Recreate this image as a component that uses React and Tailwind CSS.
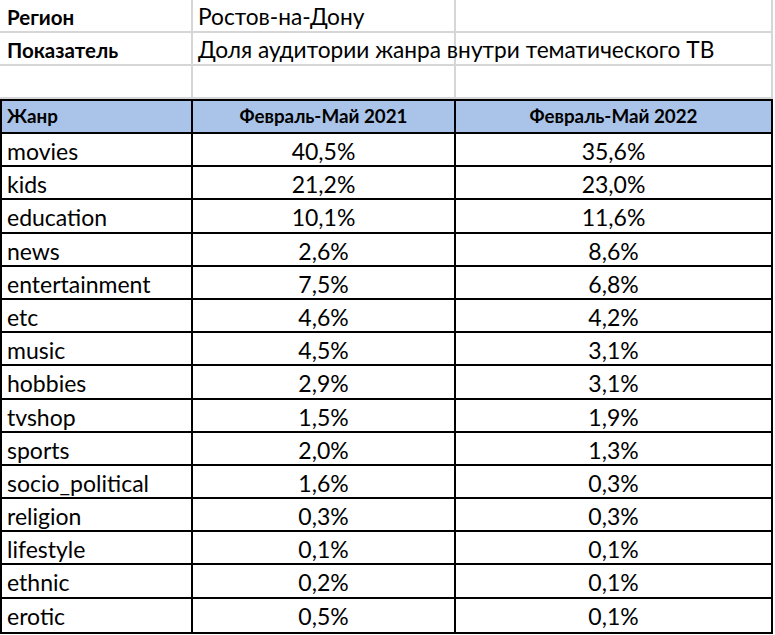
const info = [
  { label: 'Регион', value: 'Ростов-на-Дону' },
  { label: 'Показатель', value: 'Доля аудитории жанра внутри тематического ТВ' },
  { label: '', value: '' },
];

const rows = [
  ['movies', '40,5%', '35,6%'],
  ['kids', '21,2%', '23,0%'],
  ['education', '10,1%', '11,6%'],
  ['news', '2,6%', '8,6%'],
  ['entertainment', '7,5%', '6,8%'],
  ['etc', '4,6%', '4,2%'],
  ['music', '4,5%', '3,1%'],
  ['hobbies', '2,9%', '3,1%'],
  ['tvshop', '1,5%', '1,9%'],
  ['sports', '2,0%', '1,3%'],
  ['socio_political', '1,6%', '0,3%'],
  ['religion', '0,3%', '0,3%'],
  ['lifestyle', '0,1%', '0,1%'],
  ['ethnic', '0,2%', '0,1%'],
  ['erotic', '0,5%', '0,1%'],
];

export default function App() {
  return (
    <div className="w-[775px] h-[635px] bg-white overflow-hidden text-black font-['Lato','Open_Sans',sans-serif]">
      {/* верхний блок без рамки таблицы */}
      <div className="w-[773px]">
        {info.map((r, i) => (
          <div key={i} className="grid grid-cols-[193px_263px_317px] h-[33px] border-b-2 border-[#d6d6d6]">
            <div className="border-r-2 border-[#d6d6d6] pl-[7px] flex items-center text-[20.5px] font-bold">{r.label}</div>
            <div className="border-r-2 border-[#d6d6d6] pl-[5px] flex items-center text-[22.7px] whitespace-nowrap relative z-10">{r.value}</div>
            <div className="border-r-2 border-[#d6d6d6]"></div>
          </div>
        ))}
      </div>

      <div className="w-[773px] border-2 border-black">
        <div className="grid grid-cols-[191px_263px_315px] h-[33px] bg-[#a9c4e8] border-b-2 border-black text-[18.8px] font-bold">
          <div className="border-r-2 border-black pl-[5px] flex items-center">Жанр</div>
          <div className="border-r-2 border-black flex items-center justify-center">Февраль-Май 2021</div>
          <div className="flex items-center justify-center">Февраль-Май 2022</div>
        </div>
        {rows.map((r, i) => (
          <div
            key={r[0]}
            className={`grid grid-cols-[191px_263px_315px] h-[33.2px] text-[23px] ${i < rows.length - 1 ? 'border-b-2 border-black' : ''}`}
          >
            <div className="border-r-2 border-black pl-[5px] flex items-center">{r[0]}</div>
            <div className="border-r-2 border-black flex items-center justify-center">{r[1]}</div>
            <div className="flex items-center justify-center">{r[2]}</div>
          </div>
        ))}
      </div>
    </div>
  );
}
